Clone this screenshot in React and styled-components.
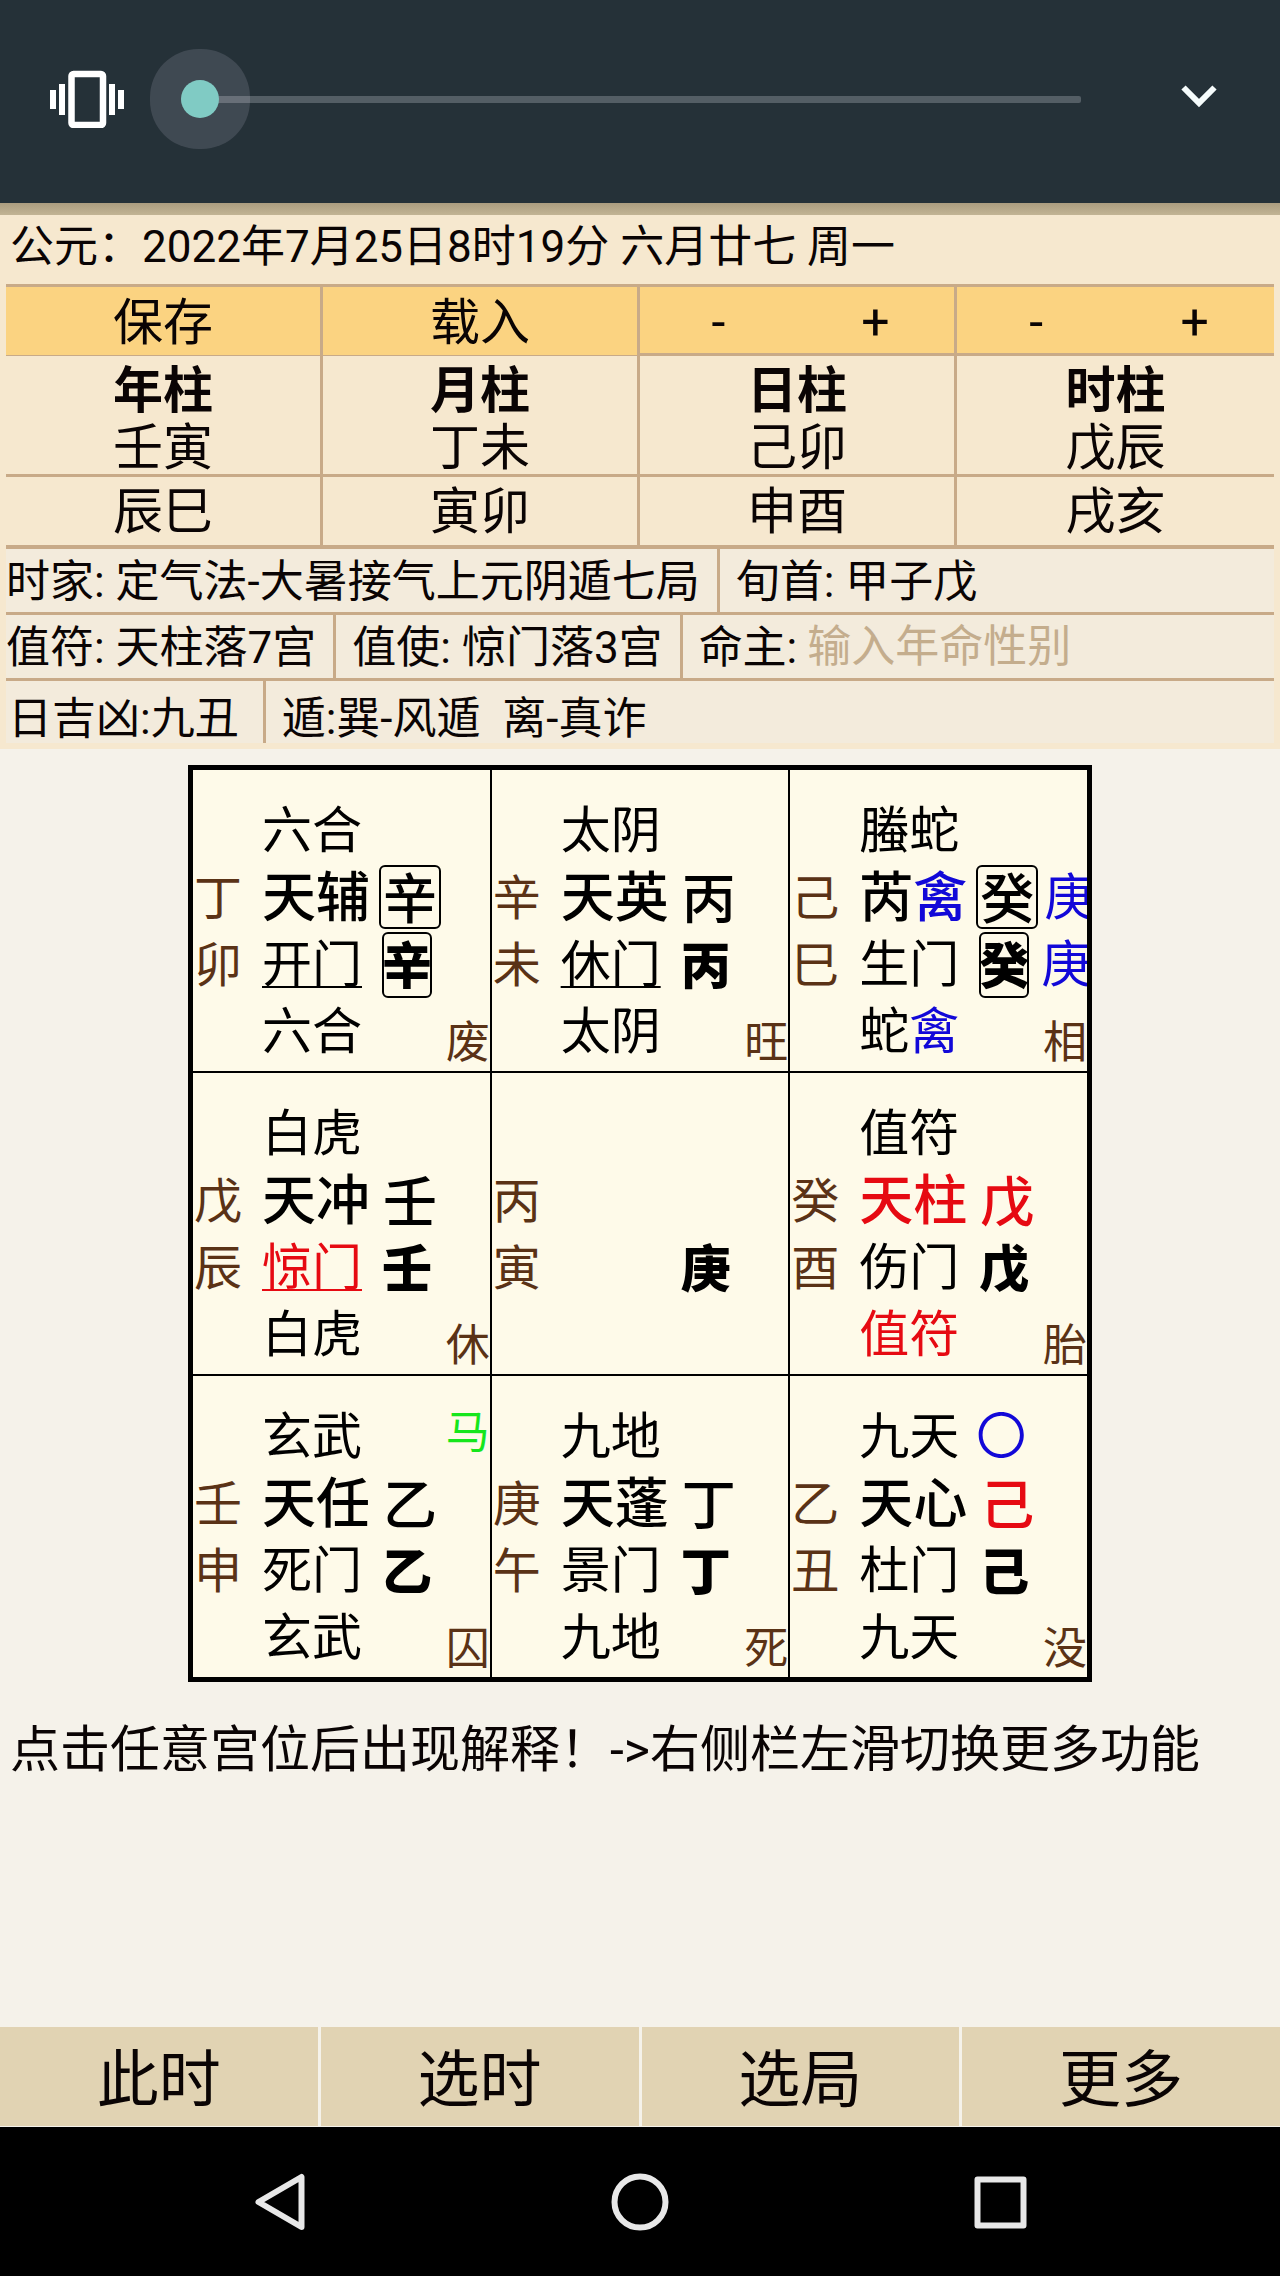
import React, { useState } from 'react';
import styled, { createGlobalStyle } from 'styled-components';

const SANS = 'Roboto, "Noto Sans CJK SC", sans-serif';

const BROWN = '#5a3216';
const BLUE = '#1208d8';
const RED = '#e60a12';
const GREEN = '#16e61c';
const RULE = '#c8aa88';

const GlobalStyle = createGlobalStyle`
  * { box-sizing: border-box; }
  body {
    margin: 0;
    background: #f5f2ea;
    color: #0a0404;
    font-family: ${SANS};
  }
  button, input {
    font: inherit;
    color: inherit;
    background: none;
    border: 0;
    padding: 0;
    margin: 0;
  }
  button { cursor: pointer; }
`;

const Page = styled.div`
  display: flex;
  flex-direction: column;
  min-height: 100vh;
`;

const VolumePanel = styled.div`
  display: flex;
  align-items: center;
  padding: 70px 63px 75px 50px;
  background: #253138;
  svg { display: block; }
`;

const VolumeSlider = styled.input`
  appearance: none;
  flex: 1;
  min-width: 0;
  height: 38px;
  margin: 0 100px 0 55px;
  background: transparent;
  outline: none;
  &::-webkit-slider-runnable-track {
    height: 7px;
    border-radius: 2px;
    background: #545e65;
  }
  &::-webkit-slider-thumb {
    appearance: none;
    width: 38px;
    height: 38px;
    margin-top: -16px;
    border-radius: 50%;
    background: #80cbc4;
    box-shadow: 0 0 0 31px rgba(230, 220, 240, 0.14);
  }
`;

const PanelShadow = styled.div`
  height: 12px;
  background: linear-gradient(#ab9d80, #c2b494);
`;

const Info = styled.section`
  padding: 0 6px 6px;
  background: #f6e8cf;
`;

const DateLine = styled.h1`
  margin: 0;
  padding: 0 4px 5px;
  font-size: 44px;
  font-weight: 400;
  line-height: 64px;
`;

const PillarTable = styled.table`
  width: 100%;
  table-layout: fixed;
  border-collapse: separate;
  border-spacing: 0;
  border-top: 3px solid ${RULE};
  font-size: 50px;
  text-align: center;
  line-height: 58px;
`;

const PillarCell = styled.td`
  height: ${(p) => p.$height}px;
  padding: ${(p) => p.$top || 0}px 0 0;
  border-right: 3px solid ${RULE};
  border-bottom: ${(p) => p.$rule || 3}px solid ${RULE};
  background: ${(p) => (p.$action ? '#fbd381' : 'transparent')};
  &:last-child { border-right: 0; }
`;

const ActionGroup = styled.div`
  display: flex;
`;

const ActionButton = styled.button`
  flex: 1;
  line-height: 62px;
`;

const PillarName = styled.div`
  font-weight: 700;
  line-height: 56px;
`;

const PillarStem = styled.div`
  height: 55px;
`;

const DetailRow = styled.div`
  display: flex;
  font-size: 44px;
  line-height: ${(p) => (p.$last ? 76 : 66)}px;
  height: ${(p) => (p.$last ? 62 : 66)}px;
  padding-left: ${(p) => (p.$last ? 2 : 0)}px;
  border-bottom: ${(p) => (p.$last ? 0 : 3)}px solid ${RULE};
  background: #f3ebdc;
  white-space: pre;
`;

const Detail = styled.div`
  padding-right: ${(p) => p.$gap || 17}px;
  border-right: 3px solid ${RULE};
  & + & { padding-left: 16px; }
  &:last-child { flex: 1; border-right: 0; display: flex; min-width: 0; }
`;

const FateInput = styled.input`
  flex: 1;
  min-width: 0;
  margin-left: 10px;
  outline: none;
  &::placeholder { color: #c4ad8d; opacity: 1; }
`;

const Board = styled.main`
  width: calc(100% - 376px);
  min-width: 904px;
  margin: 16px auto 0;
  display: grid;
  grid-template-columns: repeat(3, minmax(0, 1fr));
  gap: 2px;
  border: 5px solid #000;
  background: #000;
`;

const Palace = styled.button`
  display: grid;
  grid-template-columns: 69px 1fr;
  grid-template-rows: 28px repeat(4, 67px) 5px;
  overflow: hidden;
  background: #fefae9;
  color: #000;
  font-size: 50px;
  line-height: 67px;
  text-align: left;
  white-space: pre;
`;

const Earth = styled.span`
  grid-column: 1;
  grid-row: ${(p) => p.$row};
  padding-left: 1px;
  color: ${BROWN};
  font-size: 48px;
  line-height: 68px;
`;

const Line = styled.span`
  grid-column: 2;
  grid-row: ${(p) => p.$row};
  display: flex;
  min-width: 0;
`;

const Name = styled.span`
  flex: none;
  width: ${(p) => (p.$narrow ? 117 : 120)}px;
`;

const Tone = styled.span`
  color: ${(p) => p.$color};
  text-decoration: ${(p) => (p.$underline ? 'underline' : 'none')};
  text-decoration-thickness: 2px;
  text-underline-offset: 4px;
`;

const StarName = styled(Name)`
  font-size: 54px;
  font-weight: 500;
  line-height: 67px;
`;

const StemBox = styled.span`
  flex: none;
  display: flex;
  justify-content: center;
  width: ${(p) => (p.$brush ? 62 : 50)}px;
  height: ${(p) => (p.$brush ? 64 : 66)}px;
  border: 2px solid ${(p) => (p.$boxed ? '#000' : 'transparent')};
  border-radius: 6px;
  color: ${(p) => p.$color};
  font-size: ${(p) => (p.$brush ? 54 : 50)}px;
  font-weight: ${(p) => (p.$brush ? 500 : 900)};
  line-height: 67px;
`;

const Extra = styled.span`
  flex: none;
  padding-left: ${(p) => p.$gap}px;
  color: ${BLUE};
`;

const Corner = styled.span`
  grid-area: 1 / 1 / -1 / -1;
  justify-self: end;
  align-self: ${(p) => (p.$top ? 'start' : 'end')};
  padding-top: ${(p) => (p.$top ? 31 : 0)}px;
  padding-bottom: 2px;
  color: ${(p) => p.$color};
  font-size: 44px;
  line-height: 52px;
`;

const Hint = styled.p`
  flex: 1;
  margin: 0;
  padding: 36px 10px;
  font-size: 50px;
  line-height: 64px;
`;

const TabBar = styled.nav`
  display: grid;
  grid-template-columns: repeat(4, 1fr);
  gap: 3px;
  padding-bottom: 1px;
`;

const Tab = styled.button`
  padding-top: 8px;
  background: #e1d3b3;
  font-size: 62px;
  line-height: 91px;
`;

const SystemBar = styled.footer`
  display: flex;
  justify-content: center;
  gap: 300px;
  padding: 45px 0 44px;
  background: #000;
  svg { display: block; }
`;

const pillars = [
  { name: '年柱', stem: '壬寅', empty: '辰巳' },
  { name: '月柱', stem: '丁未', empty: '寅卯' },
  { name: '日柱', stem: '己卯', empty: '申酉' },
  { name: '时柱', stem: '戊辰', empty: '戌亥' },
];

const palaces = [
  { god: '六合', earth: '丁卯', star: '天辅', sky: '辛', door: '开门', ground: '辛', underline: true, boxed: true, base: '六合', state: '废' },
  { god: '太阴', earth: '辛未', star: '天英', sky: '丙', door: '休门', ground: '丙', underline: true, base: '太阴', state: '旺' },
  { god: '螣蛇', earth: '己巳', star: '芮', guest: '禽', sky: '癸', door: '生门', ground: '癸', boxed: true, extra: '庚', base: '蛇', state: '相' },
  { god: '白虎', earth: '戊辰', star: '天冲', sky: '壬', door: '惊门', doorColor: RED, underline: true, ground: '壬', base: '白虎', state: '休' },
  { god: '', earth: '丙寅', star: '', sky: '', door: '', ground: '庚', base: '', state: '' },
  { god: '值符', earth: '癸酉', star: '天柱', starColor: RED, sky: '戊', skyColor: RED, door: '伤门', ground: '戊', base: '值符', baseColor: RED, state: '胎' },
  { god: '玄武', earth: '壬申', star: '天任', sky: '乙', door: '死门', ground: '乙', base: '玄武', state: '囚', horse: true },
  { god: '九地', earth: '庚午', star: '天蓬', sky: '丁', door: '景门', ground: '丁', base: '九地', state: '死' },
  { god: '九天', earth: '乙丑', star: '天心', sky: '己', skyColor: RED, door: '杜门', ground: '己', base: '九天', state: '没', void: true },
];

function VibrateIcon() {
  return (
    <svg width="76" height="58" viewBox="0 0 76 58" fill="#fff" aria-hidden="true">
      <rect x="0" y="20" width="6" height="19" />
      <rect x="9" y="14" width="6" height="31" />
      <rect x="59" y="14" width="6" height="31" />
      <rect x="68" y="20" width="6" height="19" />
      <rect x="21.5" y="4" width="31.5" height="51" rx="2" fill="none" stroke="#fff" strokeWidth="6.5" />
    </svg>
  );
}

function ChevronIcon() {
  return (
    <svg width="36" height="58" viewBox="0 0 36 58" aria-hidden="true">
      <path d="M2.5 17.5 L18 33 L33.5 17.5" fill="none" stroke="#f6fcfc" strokeWidth="6" />
    </svg>
  );
}

function NavIcon({ children }) {
  return (
    <svg width="60" height="60" viewBox="0 0 60 60" fill="none" stroke="#e8e8e8" strokeWidth="6" strokeLinejoin="round" aria-hidden="true">
      {children}
    </svg>
  );
}

function PalaceCell({ data: d }) {
  return (
    <Palace type="button">
      <Earth $row={3}>{d.earth[0]}</Earth>
      <Earth $row={4}>{d.earth[1]}</Earth>
      <Line $row={2}>
        {d.god}
        {d.void && <Extra $gap={17}>〇</Extra>}
      </Line>
      <Line $row={3}>
        <StarName $narrow>
          <Tone $color={d.starColor}>{d.star}</Tone>
          {d.guest && <Tone $color={BLUE}>{d.guest}</Tone>}
        </StarName>
        <StemBox $brush $boxed={d.boxed} $color={d.skyColor}>{d.sky}</StemBox>
        {d.extra && <Extra $gap={6}>{d.extra}</Extra>}
      </Line>
      <Line $row={4}>
        <Name>
          <Tone $color={d.doorColor} $underline={d.underline}>{d.door}</Tone>
        </Name>
        <StemBox $boxed={d.boxed}>{d.ground}</StemBox>
        {d.extra && <Extra $gap={12}>{d.extra}</Extra>}
      </Line>
      <Line $row={5}>
        <Tone $color={d.baseColor}>{d.base}</Tone>
        {d.guest && <Tone $color={BLUE}>{d.guest}</Tone>}
      </Line>
      {d.horse && <Corner $top $color={GREEN}>马</Corner>}
      {d.state && <Corner $color={BROWN}>{d.state}</Corner>}
    </Palace>
  );
}

export default function App() {
  const [volume, setVolume] = useState(0);
  const [fate, setFate] = useState('');

  return (
    <Page>
      <GlobalStyle />
      <VolumePanel>
        <VibrateIcon />
        <VolumeSlider
          type="range"
          min="0"
          max="15"
          value={volume}
          onChange={(e) => setVolume(Number(e.target.value))}
          aria-label="音量"
        />
        <button type="button" aria-label="展开">
          <ChevronIcon />
        </button>
      </VolumePanel>
      <PanelShadow />

      <Info>
        <DateLine>公元：2022年7月25日8时19分 六月廿七 周一</DateLine>
        <PillarTable>
          <tbody>
            <tr>
              <PillarCell $action $height={69} $rule={1} $top={4}>
                <ActionGroup><ActionButton type="button">保存</ActionButton></ActionGroup>
              </PillarCell>
              <PillarCell $action $height={69} $rule={1} $top={4}>
                <ActionGroup><ActionButton type="button">载入</ActionButton></ActionGroup>
              </PillarCell>
              {['日', '时'].map((unit) => (
                <PillarCell key={unit} $action $height={69} $top={4}>
                  <ActionGroup>
                    <ActionButton type="button">-</ActionButton>
                    <ActionButton type="button">+</ActionButton>
                  </ActionGroup>
                </PillarCell>
              ))}
            </tr>
            <tr>
              {pillars.map((p) => (
                <PillarCell key={p.name} $height={121} $top={7}>
                  <PillarName>{p.name}</PillarName>
                  <PillarStem>{p.stem}</PillarStem>
                </PillarCell>
              ))}
            </tr>
            <tr>
              {pillars.map((p) => (
                <PillarCell key={p.name} $height={72} $rule={4} $top={2}>{p.empty}</PillarCell>
              ))}
            </tr>
          </tbody>
        </PillarTable>
        <DetailRow>
          <Detail>时家: 定气法-大暑接气上元阴遁七局</Detail>
          <Detail>旬首: 甲子戊</Detail>
        </DetailRow>
        <DetailRow>
          <Detail>值符: 天柱落7宫</Detail>
          <Detail>值使: 惊门落3宫</Detail>
          <Detail>
            <label htmlFor="fate">命主:</label>
            <FateInput
              id="fate"
              placeholder="输入年命性别"
              value={fate}
              onChange={(e) => setFate(e.target.value)}
            />
          </Detail>
        </DetailRow>
        <DetailRow $last>
          <Detail $gap={24}>日吉凶:九丑</Detail>
          <Detail>遁:巽-风遁{'\u00a0\u00a0'}离-真诈</Detail>
        </DetailRow>
      </Info>

      <Board>
        {palaces.map((p) => (
          <PalaceCell key={p.earth} data={p} />
        ))}
      </Board>

      <Hint>点击任意宫位后出现解释！-&gt;右侧栏左滑切换更多功能</Hint>

      <TabBar>
        {['此时', '选时', '选局', '更多'].map((t) => (
          <Tab key={t} type="button">{t}</Tab>
        ))}
      </TabBar>
      <SystemBar>
        <button type="button" aria-label="返回">
          <NavIcon><path d="M51.5 5 V55 L8.5 30 Z" /></NavIcon>
        </button>
        <button type="button" aria-label="主屏幕">
          <NavIcon><circle cx="30" cy="30" r="25.5" /></NavIcon>
        </button>
        <button type="button" aria-label="最近任务">
          <NavIcon><rect x="7.5" y="7.5" width="46" height="46" /></NavIcon>
        </button>
      </SystemBar>
    </Page>
  );
}
